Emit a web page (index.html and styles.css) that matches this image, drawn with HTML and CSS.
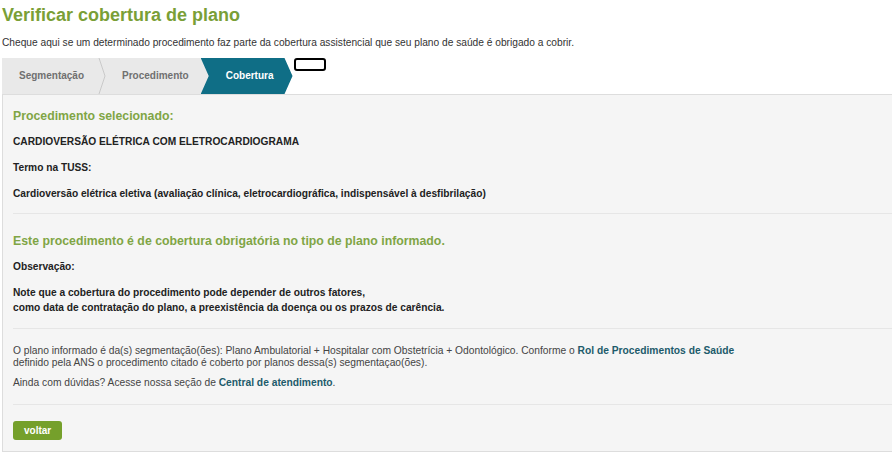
FILE: index.html
```html
<!DOCTYPE html>
<html lang="pt-BR">
<head>
    <meta charset="UTF-8">
    <meta name="viewport" content="width=device-width, initial-scale=1.0">
    <title>Verificar cobertura de plano</title>
    <link rel="stylesheet" href="styles.css">
</head>
<body>
    <div class="page">
        <h1>Verificar cobertura de plano</h1>
        <p class="intro">Cheque aqui se um determinado procedimento faz parte da cobertura assistencial que seu plano de saúde é obrigado a cobrir.</p>

        <!-- Etapas -->
        <div class="steps">
            <div class="step">Segmentação</div>
            <svg class="step-sep" width="8" height="36" viewBox="0 0 8 36">
                <polyline points="1,0 7,18 1,36" fill="none" stroke="#c9c9c9" stroke-width="1"/>
            </svg>
            <div class="step">Procedimento</div>
            <div class="step active">Cobertura</div>
            <span class="focus-box"></span>
        </div>

        <div class="result">
            <section class="block first">
                <h2>Procedimento selecionado:</h2>
                <p class="strong">CARDIOVERSÃO ELÉTRICA COM ELETROCARDIOGRAMA</p>
                <p class="strong">Termo na TUSS:</p>
                <p class="strong">Cardioversão elétrica eletiva (avaliação clínica, eletrocardiográfica, indispensável à desfibrilação)</p>
            </section>

            <section class="block">
                <h2>Este procedimento é de cobertura obrigatória no tipo de plano informado.</h2>
                <p class="strong">Observação:</p>
                <p class="strong">Note que a cobertura do procedimento pode depender de outros fatores,<br>como data de contratação do plano, a preexistência da doença ou os prazos de carência.</p>
            </section>

            <section class="block small">
                <p>O plano informado é da(s) segmentação(ões): Plano Ambulatorial + Hospitalar com Obstetrícia + Odontológico. Conforme o <a href="#">Rol de Procedimentos de Saúde</a><br>definido pela ANS o procedimento citado é coberto por planos dessa(s) segmentaçao(ões).</p>
                <p>Ainda com dúvidas? Acesse nossa seção de <a href="#">Central de atendimento</a>.</p>
            </section>

            <div class="actions">
                <button class="btn">voltar</button>
            </div>
        </div>
    </div>
</body>
</html>
```

FILE: styles.css
```css
body {
    font-family: "Liberation Sans", Arial, sans-serif;
    margin: 0;
    padding: 0;
    background-color: #fff;
    color: #333;
}
.page {
    padding-left: 2px;
}
h1 {
    font-size: 18px;
    line-height: 24px;
    color: #7a9f37;
    margin: 3px 0 0;
}
.intro {
    font-size: 10.2px;
    margin: 10px 0 0;
    color: #333;
}
/* Etapas */
.steps {
    display: flex;
    margin-top: 10px;
    height: 36px;
}
.step {
    background-color: #e9e9e9;
    color: #707070;
    font-size: 10px;
    font-weight: bold;
    line-height: 36px;
    padding: 0 20px 0 16px;
}
.step:first-child {
    padding: 0 14px 0 17px;
}
.step-sep {
    background-color: #e9e9e9;
    display: block;
}
.step.active {
    background-color: #0f6e86;
    color: #fff;
    margin-left: -8px;
    padding: 0 19px 0 25px;
    clip-path: polygon(0 0, calc(100% - 8px) 0, 100% 50%, calc(100% - 8px) 100%, 0 100%, 8px 50%);
}
.focus-box {
    width: 28px;
    height: 9px;
    border: 2px solid #000;
    border-radius: 3px;
    margin-left: 1px;
    align-self: flex-start;
}
/* Resultado */
.result {
    background-color: #f5f5f5;
    border: 1px solid #ddd;
    border-right: none;
    padding: 0 0 0 10px;
}
.block {
    border-bottom: 1px solid #e6e6e6;
    padding: 20px 0 13px;
}
.block.first {
    padding: 14px 0 12px;
}
h2 {
    font-size: 12.3px;
    line-height: 15px;
    color: #80a545;
    margin: 0 0 10px;
}
.block p {
    margin: 0 0 11px;
}
.block p:last-child {
    margin-bottom: 0;
}
.strong {
    font-size: 10.2px;
    font-weight: bold;
    color: #222;
    line-height: 15px;
}
.block.small {
    padding: 16px 0 15px;
}
.small p {
    font-size: 10.25px;
    line-height: 12px;
    color: #444;
}
.block.small p {
    margin-bottom: 8px;
}
.block.small p:last-child {
    margin-bottom: 0;
}
.small a {
    color: #1d5b6b;
    font-weight: bold;
    text-decoration: none;
}
.actions {
    padding: 16px 0 11px;
}
.btn {
    display: block;
    background-color: #75a02b;
    color: #fff;
    border: none;
    border-radius: 3px;
    font-family: inherit;
    font-size: 10px;
    font-weight: bold;
    height: 19px;
    padding: 0 11px;
    cursor: pointer;
}
```
